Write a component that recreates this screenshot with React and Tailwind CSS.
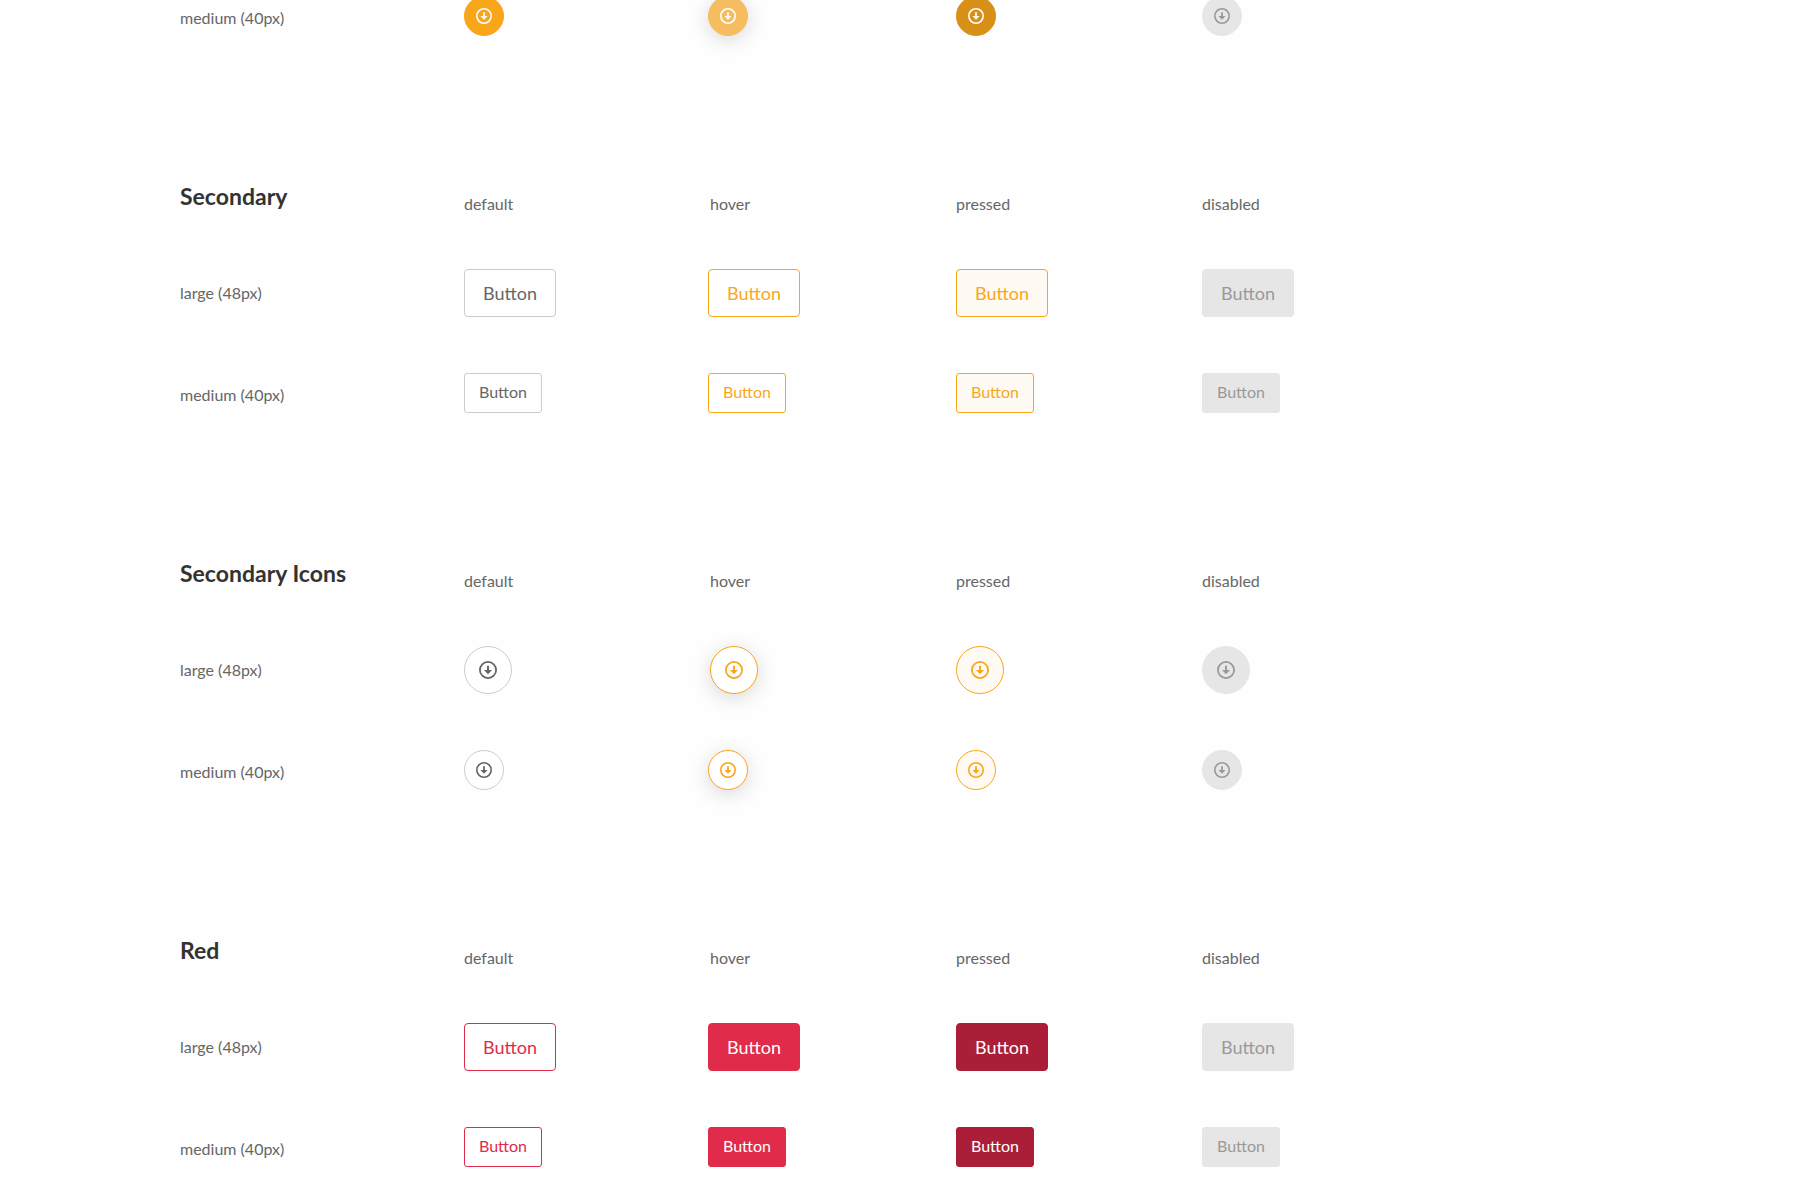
import clsx from 'clsx';

const STATES = ['default', 'hover', 'pressed', 'disabled'];

const SIZES = [
  { id: 'large', label: 'large (48px)' },
  { id: 'medium', label: 'medium (40px)' },
];

const DISABLED = 'bg-[#e6e6e6] border-[#e6e6e6] text-[#999]';

const THEMES = {
  primary: {
    default: 'bg-[#faa61a] border-[#faa61a] text-white',
    hover: 'bg-[#f5bd60] border-[#f5bd60] text-white',
    pressed: 'bg-[#d89016] border-[#d89016] text-white',
    disabled: DISABLED,
  },
  secondary: {
    default: 'bg-white border-[#ccc] text-[#666]',
    hover: 'bg-white border-[#faa61a] text-[#faa61a]',
    pressed: 'bg-[#fffaf3] border-[#faa61a] text-[#faa61a]',
    disabled: DISABLED,
  },
  red: {
    default: 'bg-white border-[#e02b4a] text-[#e02b4a]',
    hover: 'bg-[#e02b4a] border-[#e02b4a] text-white',
    pressed: 'bg-[#aa1f37] border-[#aa1f37] text-white',
    disabled: DISABLED,
  },
};

const ROW = 'grid grid-cols-[284fr_244fr_248fr_246fr_418fr]';

const ArrowIcon = ({ className }) => (
  <svg viewBox="0 0 20 20" className={className} fill="none" aria-hidden="true">
    <circle cx="10" cy="10" r="9" stroke="currentColor" strokeWidth="2" />
    <path d="M8.9 5.2h2.2v4.9h3.4L10 14.8l-4.5-4.7h3.4z" fill="currentColor" />
  </svg>
);

const TextButton = ({ theme, state, size }) => (
  <button type="button" disabled={state === 'disabled'}
    className={clsx('border', THEMES[theme][state],
      size === 'large' ? 'w-[92px] h-12 rounded text-[18px]' : 'w-[78px] h-10 rounded-[3px] pb-0.5 text-[16px]')}>
    Button
  </button>
);

const IconButton = ({ theme, state, size }) => (
  <button type="button" disabled={state === 'disabled'} aria-label="Download"
    className={clsx('flex items-center justify-center rounded-full border', THEMES[theme][state],
      size === 'large' ? 'size-12' : 'size-10',
      state === 'hover' && 'shadow-[0_4px_20px_rgba(0,0,0,0.15)]')}>
    <ArrowIcon className={size === 'large' ? 'size-[18px]' : 'size-4'} />
  </button>
);

const ButtonRow = ({ theme, icon, size, label }) => {
  const Btn = icon ? IconButton : TextButton;
  return (
    <div className={clsx(ROW, 'items-start')}>
      <p className={clsx('leading-6', size === 'large' ? 'pt-3' : 'pt-[10px]')}>{label}</p>
      {STATES.map(s => (
        <div key={s} className={clsx(icon && size === 'large' && s === 'hover' && 'pl-0.5')}>
          <Btn theme={theme} state={s} size={size} />
        </div>
      ))}
    </div>
  );
};

const Section = ({ title, theme, icon }) => (
  <section className="pt-36">
    <div className={clsx(ROW, 'items-start')}>
      <h2 className="text-[23px] leading-8 font-bold text-[#333]">{title}</h2>
      {STATES.map(s => (
        <p key={s} className={clsx('pt-3 leading-6', s === 'hover' && 'pl-0.5')}>{s}</p>
      ))}
    </div>
    <div className="flex flex-col gap-14 pt-[53px]">
      {SIZES.map(({ id, label }) => (
        <ButtonRow key={id} theme={theme} icon={icon} size={id} label={label} />
      ))}
    </div>
  </section>
);

const App = () => (
  <main className="flow-root min-h-screen overflow-hidden bg-[#fefefe] px-[180px] font-['Lato','Noto_Sans',sans-serif] text-[16px] text-[#666]">
    {/* tail of the primary icon group, cut by the top edge */}
    <div className="-mt-1">
      <ButtonRow theme="primary" icon size="medium" label="medium (40px)" />
    </div>
    <Section title="Secondary" theme="secondary" />
    <Section title="Secondary Icons" theme="secondary" icon />
    <Section title="Red" theme="red" />
  </main>
);

export default App;
